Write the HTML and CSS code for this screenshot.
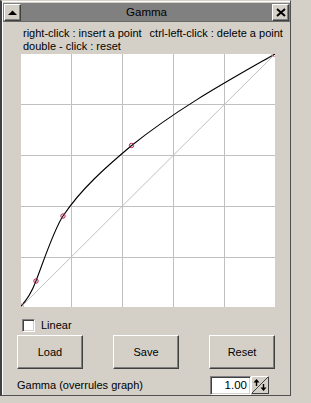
FILE: index.html
```html
<!DOCTYPE html>
<html lang="en">
<head>
    <meta charset="UTF-8">
    <title>Gamma</title>
    <link rel="stylesheet" href="styles.css">
</head>
<body>
    <div class="window">
        <div class="titlebar">
            <button class="tb-btn">
                <svg width="9" height="5" viewBox="0 0 9 5"><path d="M0 5 L4.5 0.5 L9 5 Z" fill="#000"/></svg>
            </button>
            <span class="title">Gamma</span>
            <button class="tb-btn">
                <svg width="10" height="9" viewBox="0 0 10 9"><path d="M1 1 L9 8 M9 1 L1 8" stroke="#000" stroke-width="2"/></svg>
            </button>
        </div>

        <div class="help">
            <div class="help-line">
                <span>right-click : insert a point</span>
                <span>ctrl-left-click : delete a point</span>
            </div>
            <div class="help-line">double - click : reset</div>
        </div>

        <svg class="graph" width="254" height="253" viewBox="21 53 254 253">
            <rect x="21" y="53" width="254" height="253" fill="#fff"/>
            <g stroke="#c0c0c0" stroke-width="1">
                <line x1="71.5" y1="53" x2="71.5" y2="306"/>
                <line x1="122.5" y1="53" x2="122.5" y2="306"/>
                <line x1="173.5" y1="53" x2="173.5" y2="306"/>
                <line x1="224.5" y1="53" x2="224.5" y2="306"/>
                <line x1="21" y1="103.5" x2="275" y2="103.5"/>
                <line x1="21" y1="154.5" x2="275" y2="154.5"/>
                <line x1="21" y1="205.5" x2="275" y2="205.5"/>
                <line x1="21" y1="256.5" x2="275" y2="256.5"/>
                <line x1="21" y1="306" x2="275" y2="53"/>
            </g>
            <!-- gamma curve through the control points -->
            <path d="M21 305 C26 300 31 293 36 280 C44 259 54 228.5 63 215 C81 188 106 166 131 145 C179 106.6 227 80.4 275 53"
                  fill="none" stroke="#000" stroke-width="1.1"/>
            <g fill="none" stroke="#b0204a" stroke-width="1">
                <circle cx="36" cy="280" r="2.2"/>
                <circle cx="63" cy="215" r="2.2"/>
                <circle cx="131.5" cy="144.5" r="2.2"/>
                <circle cx="21.5" cy="304.5" r="2.2" stroke="#e0a0b0"/>
                <circle cx="274" cy="53.5" r="2.2" stroke="#e0a0b0"/>
            </g>
        </svg>

        <label class="check">
            <span class="check-box"></span>
            Linear
        </label>

        <div class="buttons">
            <button class="button">Load</button>
            <button class="button">Save</button>
            <button class="button">Reset</button>
        </div>

        <div class="gamma-row">
            <span class="gamma-label">Gamma (overrules graph)</span>
            <input class="gamma-input" type="text" value="1.00">
            <span class="spin">
                <svg width="16" height="16" viewBox="0 0 16 16">
                    <line x1="0" y1="16" x2="16" y2="0" stroke="#404040" stroke-width="1"/>
                    <path d="M4.5 2 L1.5 5.5 L3.8 5.5 L3.8 9 L5.2 9 L5.2 5.5 L7.5 5.5 Z" fill="#000"/>
                    <path d="M11.5 14 L8.5 10.5 L10.8 10.5 L10.8 7 L12.2 7 L12.2 10.5 L14.5 10.5 Z" fill="#000"/>
                </svg>
            </span>
        </div>
    </div>
</body>
</html>
```

FILE: styles.css
```css
body {
    margin: 0;
    background: #d4d0c8;
    font-family: "Liberation Sans", Arial, sans-serif;
    font-size: 11px;
    color: #000;
}

.window {
    width: 291px;
    height: 396px;
    box-sizing: border-box;
    background: #d4d0c8;
    border-left: 2px solid #404040;
    border-right: 1px solid #505050;
    border-bottom: 1px solid #505050;
    border-top: 1px solid #d4d0c8;
    padding: 2px 0 0 1px;
    box-shadow: inset 1px 1px #fff;
}

.titlebar {
    display: flex;
    align-items: center;
    height: 19px;
    padding: 1px;
    box-sizing: border-box;
    background: #808080;
    border-bottom: 1px solid #6a6a6a;
}

.tb-btn {
    width: 17px;
    height: 17px;
    padding: 0;
    display: flex;
    align-items: center;
    justify-content: center;
    background: #d4d0c8;
    border: 1px solid;
    border-color: #fff #404040 #404040 #fff;
    box-shadow: inset -1px -1px #808080;
}

.title {
    flex: 1;
    text-align: center;
    font-size: 11.5px;
}

.help {
    margin: 5px 0 0 20px;
    line-height: 13px;
    height: 27px;
    white-space: nowrap;
}

.help-line {
    display: flex;
    gap: 8px;
}

.graph {
    display: block;
    margin-left: 18px;
}

.check {
    display: flex;
    align-items: center;
    margin: 12px 0 0 19px;
    height: 13px;
    line-height: 13px;
}

.check-box {
    width: 13px;
    height: 13px;
    box-sizing: border-box;
    margin-right: 6px;
    background: #fff;
    border: 1px solid;
    border-color: #808080 #fff #fff #808080;
    box-shadow: inset 1px 1px #404040, inset -1px -1px #d4d0c8;
}

.buttons {
    display: flex;
    justify-content: space-between;
    width: 258px;
    margin: 3px 0 0 14px;
}

.button {
    width: 66px;
    height: 34px;
    padding: 0;
    font-family: "Liberation Sans", Arial, sans-serif;
    font-size: 11px;
    color: #000;
    background: #d4d0c8;
    border: 1px solid;
    border-color: #fff #404040 #404040 #fff;
    box-shadow: inset -1px -1px #808080;
}

.gamma-row {
    display: flex;
    align-items: center;
    height: 18px;
    margin: 7px 21px 0 14px;
}

.gamma-label {
    flex: 1;
}

.gamma-input {
    width: 41px;
    height: 19px;
    box-sizing: border-box;
    padding: 0 3px 0 0;
    text-align: right;
    font-family: "Liberation Sans", Arial, sans-serif;
    font-size: 11.5px;
    background: #fff;
    border: 1px solid;
    border-color: #808080 #fff #fff #808080;
    box-shadow: inset 1px 1px #404040, inset -1px -1px #d4d0c8;
}

.spin {
    width: 18px;
    height: 18px;
    box-sizing: border-box;
    display: flex;
    align-items: center;
    justify-content: center;
    background: #d4d0c8;
    border: 1px solid;
    border-color: #fff #404040 #404040 #fff;
}
```
